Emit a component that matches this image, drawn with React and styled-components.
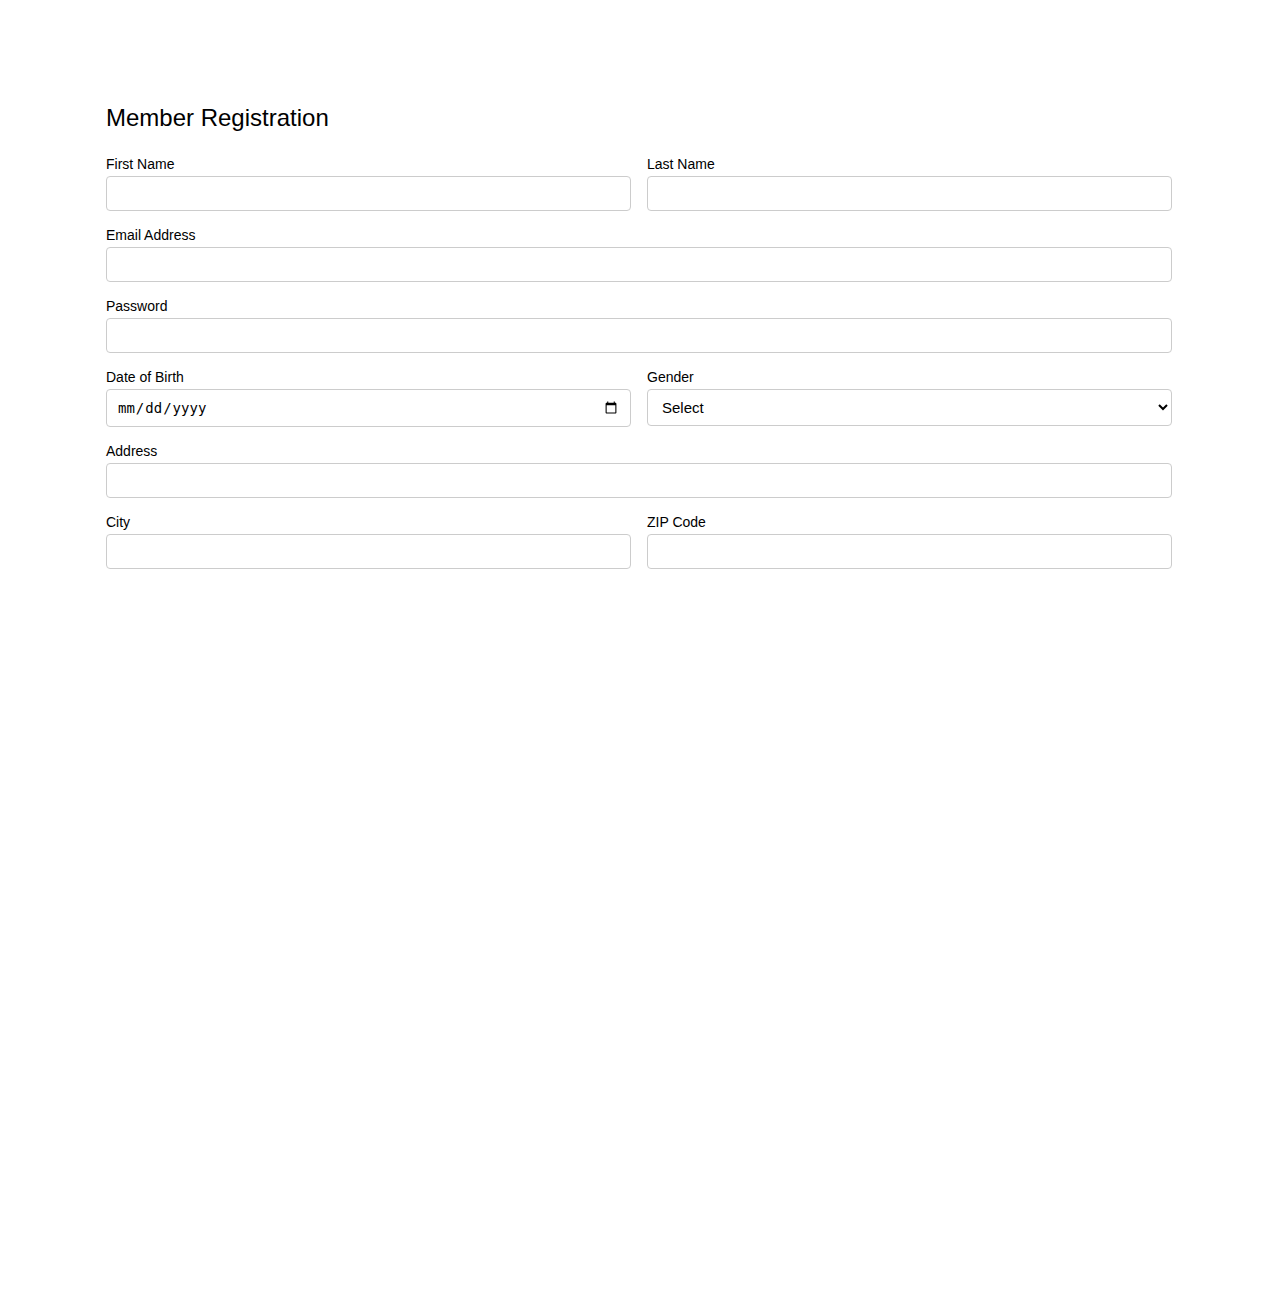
import styled, { createGlobalStyle } from "styled-components";

const GlobalStyle = createGlobalStyle`
  body {
    margin: 0;
    background: #fff;
    font-family: "Liberation Sans", Arial, sans-serif;
    color: #111;
  }
`;

const Page = styled.div`
  width: 1066px;
  margin: 0 auto;
  padding-top: 104px;
`;

const Title = styled.h2`
  font-size: 24px;
  font-weight: 400;
  margin: 0 0 24px;
  color: #000;
`;

const Form = styled.form`
  display: flex;
  flex-direction: column;
  gap: 16px;
`;

const Row = styled.div`
  display: grid;
  grid-template-columns: ${({ cols }) => (cols ? `repeat(${cols}, 1fr)` : "1fr")};
  gap: 16px;
`;

const Field = styled.div`
  display: flex;
  flex-direction: column;
`;

const Label = styled.label`
  font-size: 14px;
  margin-bottom: 4px;
  color: #000;
`;

const Input = styled.input`
  box-sizing: border-box;
  width: 100%;
  height: ${({ h }) => (h ? h : "35px")};
  padding: 8px 10px;
  border: 1px solid #ccc;
  border-radius: 4px;
  font-size: 14px;
  background: #fff;
`;

const Select = styled.select`
  box-sizing: border-box;
  width: 100%;
  height: 37px;
  padding: 8px 10px;
  border: 1px solid #ccc;
  border-radius: 4px;
  font-size: 15px;
  font-family: "Liberation Sans", Arial, sans-serif;
  color: #000;
  background: #fff;
`;

const TextField = ({ label, type = "text", h }) => (
  <Field>
    <Label>{label}</Label>
    <Input type={type} h={h} />
  </Field>
);

export default function App() {
  return (
    <>
      <GlobalStyle />
      <Page>
        <Title>Member Registration</Title>
        <Form>
          <Row cols={2}>
            <TextField label="First Name" />
            <TextField label="Last Name" />
          </Row>
          <Row>
            <TextField label="Email Address" type="email" />
          </Row>
          <Row>
            <TextField label="Password" type="password" />
          </Row>
          <Row cols={2}>
            <TextField label="Date of Birth" type="date" h="38px" />
            <Field>
              <Label>Gender</Label>
              <Select defaultValue="">
                <option value="">Select</option>
                <option value="male">Male</option>
                <option value="female">Female</option>
                <option value="other">Other</option>
              </Select>
            </Field>
          </Row>
          <Row>
            <TextField label="Address" />
          </Row>
          <Row cols={2}>
            <TextField label="City" />
            <TextField label="ZIP Code" />
          </Row>
        </Form>
      </Page>
    </>
  );
}
